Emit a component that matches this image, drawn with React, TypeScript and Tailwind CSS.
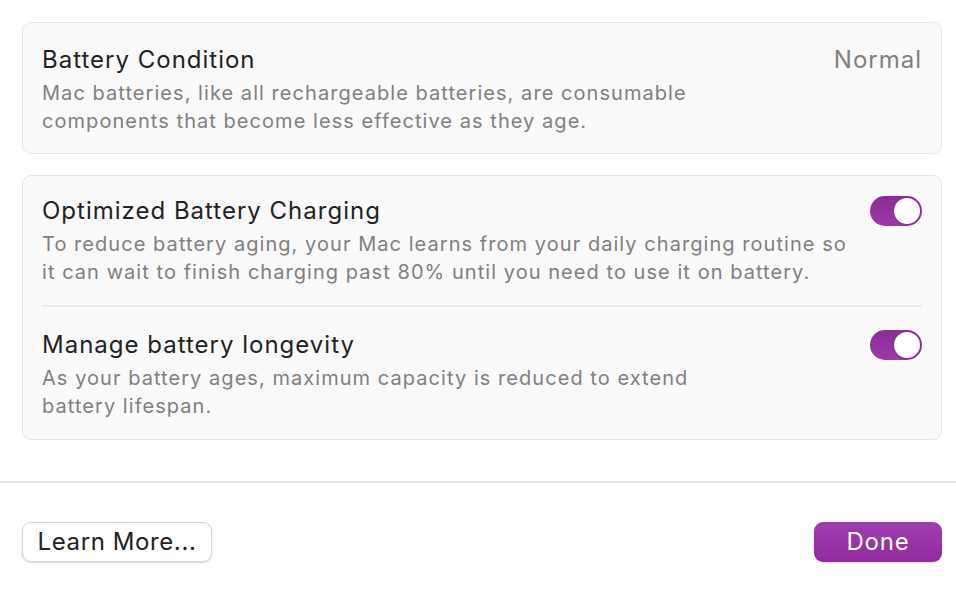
import { useState } from "react";

function Toggle({ on, onChange }: { on: boolean; onChange: () => void }) {
    return (
        <button
            onClick={onChange}
            className={`relative flex h-[30px] w-[52px] shrink-0 items-center rounded-full p-[2px] ${
                on ? "justify-end bg-gradient-to-b from-[#8c2a98] to-[#9b3aa8]" : "justify-start bg-[#e3e3e3]"
            }`}
        >
            <span className="h-[26px] w-[26px] rounded-full bg-white shadow-[0_1px_2px_rgba(0,0,0,0.25)]" />
        </button>
    );
}

export default function App() {
    const [optimized, setOptimized] = useState(true);
    const [longevity, setLongevity] = useState(true);

    return (
        <div
            className="flex h-[600px] w-[956px] flex-col bg-white text-[#222]"
            style={{ fontFamily: "Inter, 'Noto Sans', sans-serif" }}
        >
            <div className="flex flex-col gap-[21px] pl-[22px] pr-[14px] pt-[22px]">
                {/* Battery condition */}
                <div className="flex items-start justify-between rounded-[9px] border border-[#e6e6e6] bg-[#fafafa] px-[19px] pt-[22px] pb-[18px]">
                    <div>
                        <h2 className="text-[24px] leading-[30px] tracking-[1px]">Battery Condition</h2>
                        <p className="mt-[4px] w-[680px] text-[20px] leading-[28px] tracking-[1.05px] text-[#808080]">
                            Mac batteries, like all rechargeable batteries, are consumable components that become
                            less effective as they age.
                        </p>
                    </div>
                    <span className="text-[24px] leading-[30px] tracking-[1px] text-[#808080]">Normal</span>
                </div>

                {/* Charging options */}
                <div className="rounded-[9px] border border-[#e6e6e6] bg-[#fafafa] px-[19px]">
                    <div className="flex items-start justify-between border-b-2 border-[#ebebeb] pt-[20px] pb-[19px]">
                        <div>
                            <h2 className="text-[24px] leading-[30px] tracking-[1px]">Optimized Battery Charging</h2>
                            <p className="mt-[4px] w-[810px] text-[20px] leading-[28px] tracking-[1.05px] text-[#808080]">
                                To reduce battery aging, your Mac learns from your daily charging routine so it can
                                wait to finish charging past 80% until you need to use it on battery.
                            </p>
                        </div>
                        <Toggle on={optimized} onChange={() => setOptimized(!optimized)} />
                    </div>
                    <div className="flex items-start justify-between pt-[23px] pb-[19px]">
                        <div>
                            <h2 className="text-[24px] leading-[30px] tracking-[1px]">Manage battery longevity</h2>
                            <p className="mt-[4px] w-[680px] text-[20px] leading-[28px] tracking-[1.05px] text-[#808080]">
                                As your battery ages, maximum capacity is reduced to extend battery lifespan.
                            </p>
                        </div>
                        <Toggle on={longevity} onChange={() => setLongevity(!longevity)} />
                    </div>
                </div>
            </div>

            <div className="mt-[41px] h-[2px] bg-[#e4e4e4]" />

            <div className="flex items-center justify-between pl-[22px] pr-[14px] pt-[39px]">
                <button className="h-[40px] w-[190px] rounded-[9px] border border-[#d6d6d6] bg-white text-[24px] leading-none tracking-[0.6px] text-[#222] shadow-[0_1px_2px_rgba(0,0,0,0.15)]">
                    Learn More...
                </button>
                <button className="h-[40px] w-[128px] rounded-[9px] bg-gradient-to-b from-[#a03eaf] to-[#912a9e] text-[24px] leading-none tracking-[0.8px] text-white shadow-[0_1px_2px_rgba(0,0,0,0.15)]">
                    Done
                </button>
            </div>
        </div>
    );
}
